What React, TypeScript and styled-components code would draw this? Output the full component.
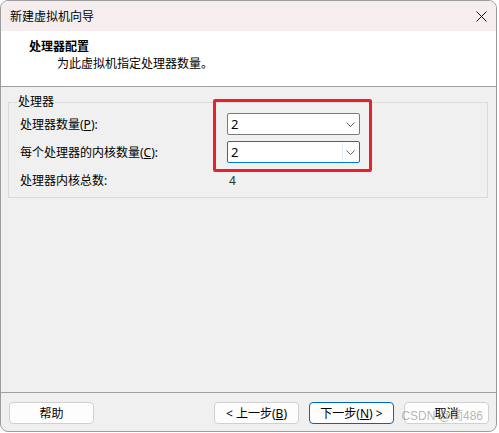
import React from 'react';
import styled, { createGlobalStyle } from 'styled-components';

const GlobalStyle = createGlobalStyle`
  body {
    margin: 0;
    background: #ffffff;
    font-family: "Noto Sans", "Noto Sans CJK SC", sans-serif;
    font-size: 12px;
    color: #000;
  }
`;

const Window = styled.div`
  position: relative;
  width: 497px;
  height: 432px;
  box-sizing: border-box;
  border: 1px solid #9c9c9c;
  border-radius: 8px;
  overflow: hidden;
  display: flex;
  flex-direction: column;
  background: #f0f0f0;
`;

const TitleBar = styled.div`
  height: 30px;
  flex: none;
  display: flex;
  align-items: center;
  justify-content: space-between;
  padding: 0 8px 0 9px;
  background: #f6eeee;
  font-size: 12px;
`;

const CloseButton = styled.div`
  width: 12px;
  height: 12px;
  display: flex;
  align-items: center;
  justify-content: center;
  margin-right: 1px;
`;

const Header = styled.div`
  height: 56px;
  flex: none;
  background: #ffffff;
  border-bottom: 1px solid #a0a0a0;
  display: flex;
  flex-direction: column;
  padding: 7px 0 0 28px;
  box-sizing: border-box;
`;

const HeaderTitle = styled.div`
  font-weight: bold;
  font-size: 12px;
  line-height: 17px;
`;

const HeaderSub = styled.div`
  font-size: 12px;
  line-height: 17px;
  padding-left: 28px;
`;

const Body = styled.div`
  flex: 1;
  padding: 7px 8px 0 7px;
`;

const Group = styled.fieldset`
  margin: 0;
  padding: 3px 10px 6px 11px;
  border: 1px solid #dadada;
  min-width: 0;
`;

const Legend = styled.legend`
  padding: 0 1px;
  margin-left: -3px;
  font-size: 12px;
  line-height: 16px;
`;

const Rows = styled.div`
  display: grid;
  grid-template-columns: 207px 133px;
  grid-auto-rows: 22px;
  row-gap: 6px;
  align-items: center;
`;

const Label = styled.div`
  font-size: 12px;
  white-space: nowrap;
`;

const Select = styled.div<{ $focused?: boolean }>`
  height: 22px;
  box-sizing: border-box;
  border: 1px solid ${({ $focused }) => ($focused ? '#0078d7' : '#7a7a7a')};
  border-radius: 2px;
  background: #ffffff;
  display: flex;
  align-items: center;
  font-size: 13px;
`;

const SelectValue = styled.div`
  flex: 1;
  padding-left: 3px;
`;

const Arrow = styled.div<{ $focused?: boolean }>`
  width: 15px;
  height: 100%;
  display: flex;
  align-items: center;
  justify-content: center;
  border-left: 1px solid ${({ $focused }) => ($focused ? '#e3edf8' : 'transparent')};
  margin-right: 1px;
`;

const Total = styled.div`
  padding-left: 2px;
  font-size: 12px;
  color: #1c3a1c;
`;

const Highlight = styled.div`
  position: absolute;
  left: 212px;
  top: 98px;
  width: 159px;
  height: 73px;
  box-sizing: border-box;
  border: 3px solid #e8212b;
  border-radius: 2px;
  pointer-events: none;
`;

const Footer = styled.div`
  height: 39px;
  flex: none;
  border-top: 1px solid #a0a0a0;
  display: flex;
  align-items: flex-start;
  padding: 9px 7px 0 8px;
  box-sizing: border-box;
`;

const Spacer = styled.div`
  flex: 1;
`;

const Button = styled.div<{ $primary?: boolean }>`
  width: 85px;
  height: 22px;
  box-sizing: border-box;
  border: 1px solid ${({ $primary }) => ($primary ? '#0067c0' : '#d0d0d0')};
  border-radius: 4px;
  background: #fdfdfd;
  display: flex;
  align-items: center;
  justify-content: center;
  font-size: 12px;
  & + & {
    margin-left: 10px;
  }
`;

const Watermark = styled.div`
  position: absolute;
  right: 13px;
  bottom: 8px;
  font-family: "Liberation Sans", "Noto Sans CJK SC", sans-serif;
  font-size: 12px;
  line-height: 14px;
  color: rgba(150, 150, 150, 0.7);
  pointer-events: none;
`;

const Chevron = () => (
  <svg width="9" height="5" viewBox="0 0 9 5">
    <polyline points="0.5,0.5 4.5,4.5 8.5,0.5" fill="none" stroke="#606060" strokeWidth="1" />
  </svg>
);

const App: React.FC = () => (
  <>
    <GlobalStyle />
    <Window>
      <TitleBar>
        <span>新建虚拟机向导</span>
        <CloseButton>
          <svg width="11" height="11" viewBox="0 0 11 11">
            <path d="M0.5 0.5 L10.5 10.5 M10.5 0.5 L0.5 10.5" stroke="#111" strokeWidth="1" />
          </svg>
        </CloseButton>
      </TitleBar>

      <Header>
        <HeaderTitle>处理器配置</HeaderTitle>
        <HeaderSub>为此虚拟机指定处理器数量。</HeaderSub>
      </Header>

      <Body>
        <Group>
          <Legend>处理器</Legend>
          <Rows>
            <Label>
              处理器数量(<u>P</u>):
            </Label>
            <Select>
              <SelectValue>2</SelectValue>
              <Arrow>
                <Chevron />
              </Arrow>
            </Select>

            <Label>
              每个处理器的内核数量(<u>C</u>):
            </Label>
            <Select $focused>
              <SelectValue>2</SelectValue>
              <Arrow $focused>
                <Chevron />
              </Arrow>
            </Select>

            <Label>处理器内核总数:</Label>
            <Total>4</Total>
          </Rows>
        </Group>
      </Body>

      <Footer>
        <Button>帮助</Button>
        <Spacer />
        <Button>
          &lt; 上一步(<u>B</u>)
        </Button>
        <Button $primary>
          下一步(<u>N</u>) &gt;
        </Button>
        <Button>取消</Button>
      </Footer>

      <Highlight />
      <Watermark>CSDN @蔺486</Watermark>
    </Window>
  </>
);

export default App;
